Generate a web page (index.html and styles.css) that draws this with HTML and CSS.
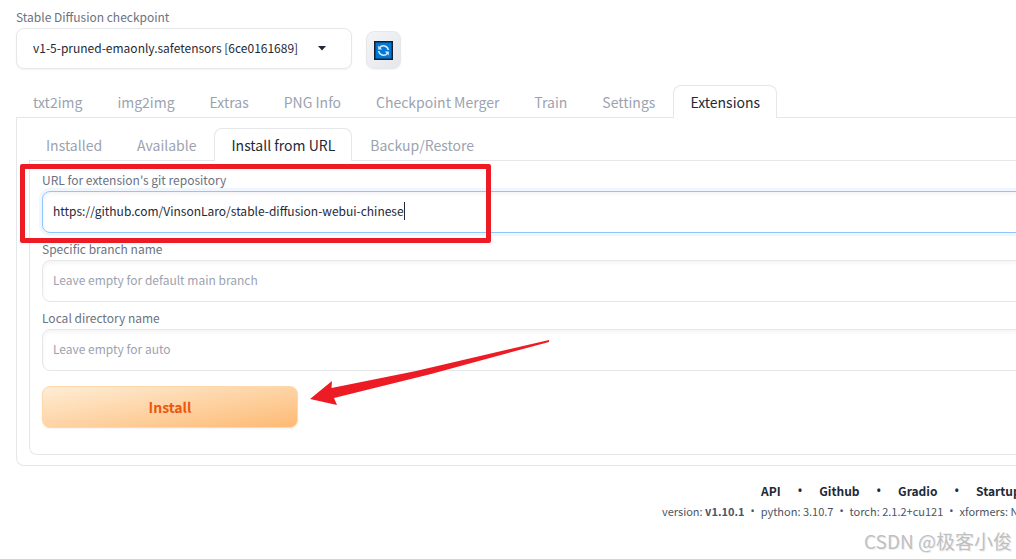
FILE: index.html
```
<!DOCTYPE html>
<html lang="en">
<head>
    <meta charset="UTF-8">
    <meta name="viewport" content="width=device-width, initial-scale=1.0">
    <title>Stable Diffusion</title>
    <link rel="stylesheet" href="styles.css">
</head>
<body>
<header class="quicksettings">
    <div class="checkpoint">
        <label for="checkpoint" class="label">Stable Diffusion checkpoint</label>
        <div class="select-wrap">
            <select id="checkpoint" class="select">
                <option>v1-5-pruned-emaonly.safetensors [6ce0161689]</option>
            </select>
            <svg class="select-arrow" width="8" height="5" viewBox="0 0 8 5"><path d="M0 0h8L4 4.5z" fill="#1f2937"/></svg>
        </div>
    </div>
    <button type="button" class="tool-btn" aria-label="Refresh">
        <svg width="19" height="19" viewBox="0 0 19 19">
            <rect x="0.75" y="0.75" width="17.5" height="17.5" fill="#0078d7" stroke="#14202e" stroke-width="1.5"/>
            <g fill="none" stroke="#d6ecff" stroke-width="1.5">
                <path d="M5.6 6.6A4.9 4.9 0 0 1 14.3 9"/>
                <path d="M13.4 12.4A4.9 4.9 0 0 1 4.7 10"/>
            </g>
            <path d="M4.2 4.6v4h4zM14.8 14.4v-4h-4z" fill="#d6ecff"/>
        </svg>
    </button>
</header>

<main>
    <nav class="tabs">
        <button type="button" class="tab">txt2img</button>
        <button type="button" class="tab">img2img</button>
        <button type="button" class="tab">Extras</button>
        <button type="button" class="tab">PNG Info</button>
        <button type="button" class="tab">Checkpoint Merger</button>
        <button type="button" class="tab">Train</button>
        <button type="button" class="tab">Settings</button>
        <button type="button" class="tab selected">Extensions</button>
    </nav>
    <section class="panel outer">
        <nav class="tabs">
            <button type="button" class="tab">Installed</button>
            <button type="button" class="tab">Available</button>
            <button type="button" class="tab selected">Install from URL</button>
            <button type="button" class="tab">Backup/Restore</button>
        </nav>
        <form class="panel inner">
            <div class="field">
                <label for="url" class="label">URL for extension's git repository</label>
                <input type="text" id="url" class="input focused" value="https://github.com/VinsonLaro/stable-diffusion-webui-chinese">
                <span class="caret"></span>
                <div class="mark-box"></div>
            </div>
            <div class="field">
                <label for="branch" class="label">Specific branch name</label>
                <input type="text" id="branch" class="input" placeholder="Leave empty for default main branch">
            </div>
            <div class="field">
                <label for="dirname" class="label">Local directory name</label>
                <input type="text" id="dirname" class="input" placeholder="Leave empty for auto">
            </div>
            <div class="actions">
                <button type="button" class="install-btn">Install</button>
                <svg class="mark-arrow" width="242" height="68" viewBox="0 0 242 68">
                    <path d="M1 61L23 43L22.500 50L107 33L240 2V4L122 36L25 60L28 67z" fill="#ed1c24"/>
                </svg>
            </div>
        </form>
    </section>
</main>

<footer class="footer">
    <div class="links">
        <a href="#">API</a><span class="dot">•</span><a href="#">Github</a><span class="dot">•</span><a href="#">Gradio</a><span class="dot">•</span><a href="#">Startup profile</a>
    </div>
    <div class="versions">
        <span>version: <b>v1.10.1</b></span><span class="dot">•</span><span>python: 3.10.7</span><span class="dot">•</span><span>torch: 2.1.2+cu121</span><span class="dot">•</span><span>xformers: N/A</span>
    </div>
</footer>
<div class="watermark">CSDN @极客小俊</div>
</body>
</html>
```

FILE: styles.css
```
* {
    box-sizing: border-box;
}
body {
    margin: 0;
    padding: 8px 0 0 16px;
    overflow: hidden;
    background: #fff;
    color: #1f2937;
    font-family: "Noto Sans CJK SC", "Source Sans Pro", sans-serif;
    font-size: 12px;
}
button, input, select {
    font-family: inherit;
    margin: 0;
}
.label {
    display: block;
    height: 20px;
    line-height: 18px;
    font-size: 12px;
    color: #6b7280;
}
.quicksettings {
    display: flex;
    align-items: flex-end;
    gap: 14px;
}
.select-wrap {
    position: relative;
}
.select {
    appearance: none;
    display: block;
    width: 336px;
    height: 41px;
    padding: 0 16px 2px;
    border: 1px solid #e5e7eb;
    border-radius: 8px;
    background: #fff;
    box-shadow: 0 1px 2px rgba(0, 0, 0, 0.05);
    color: #1f2937;
    font-size: 12px;
}
.select-arrow {
    position: absolute;
    right: 26px;
    top: 18px;
}
.tool-btn {
    display: flex;
    align-items: center;
    justify-content: center;
    width: 35px;
    height: 38px;
    padding: 0;
    border: 1px solid #e5e7eb;
    border-radius: 8px;
    background: linear-gradient(to bottom right, #f3f4f6, #e5e7eb);
    box-shadow: 0 1px 2px rgba(0, 0, 0, 0.05);
}
main {
    margin-top: 16px;
}
.tabs {
    display: flex;
    gap: 1px;
    position: relative;
    margin-bottom: -1px;
}
.tab {
    height: 33px;
    padding: 0 16px;
    border: 1px solid transparent;
    border-bottom: none;
    border-radius: 8px 8px 0 0;
    background: none;
    color: #9ca3af;
    font-size: 14px;
    line-height: 32px;
    white-space: nowrap;
}
.tab.selected {
    border-color: #e5e7eb;
    background: #fff;
    color: #1f2937;
}
.panel {
    border: 1px solid #e5e7eb;
    border-right: none;
    border-radius: 0 0 0 8px;
}
.outer {
    padding: 10px 0 10px 12px;
}
.inner {
    padding: 10px 0 26px 12px;
}
.field {
    position: relative;
    margin-bottom: 7px;
}
.input {
    display: block;
    width: calc(100% + 16px);
    height: 42px;
    padding: 0 10px 4px;
    border: 1px solid #e5e7eb;
    border-radius: 8px;
    background: #fff;
    box-shadow: inset 0 2px 4px rgba(0, 0, 0, 0.05);
    color: #1f2937;
    font-size: 12px;
}
.input::placeholder {
    color: #9ca3af;
}
.input.focused {
    border-color: #93c5fd;
    box-shadow: 0 0 0 3px #eff6ff, inset 0 2px 4px rgba(0, 0, 0, 0.05);
}
.caret {
    position: absolute;
    left: 362px;
    top: 31px;
    width: 1px;
    height: 18px;
    background: #1f2937;
}
.mark-box {
    position: absolute;
    left: -22px;
    top: -7px;
    width: 471px;
    height: 79px;
    border: 5px solid #ed1c24;
    border-radius: 2px;
}
.actions {
    position: relative;
    margin-top: 15px;
}
.install-btn {
    display: block;
    width: 256px;
    height: 42px;
    border: 1px solid #fed7aa;
    border-radius: 8px;
    background: linear-gradient(to bottom right, #ffedd5, #fdba74);
    box-shadow: 0 1px 2px rgba(0, 0, 0, 0.05);
    color: #ea580c;
    font-size: 14px;
    font-weight: 600;
}
.mark-arrow {
    position: absolute;
    left: 267px;
    top: -48px;
}
.footer {
    white-space: nowrap;
}
.links, .versions {
    display: flex;
}
.links {
    gap: 17px;
    margin: 15px 0 0 745px;
    line-height: 20px;
    font-weight: 600;
}
.links a {
    color: #1f2937;
    text-decoration: none;
}
.versions {
    gap: 6px;
    margin-left: 646px;
    line-height: 20px;
    font-size: 11px;
    color: #4b5563;
}
.dot {
    font-family: "Noto Sans", sans-serif;
}
.watermark {
    position: absolute;
    right: 4px;
    bottom: 4px;
    color: #c0c0c0;
    font-size: 19px;
    line-height: 28px;
    text-shadow: 1px 1px 0 #eee;
}
```
